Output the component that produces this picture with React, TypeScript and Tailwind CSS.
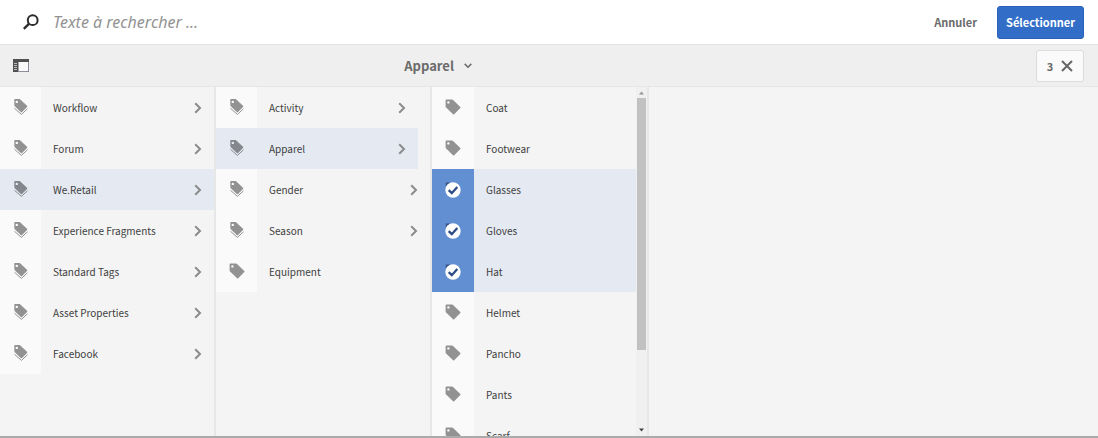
import { useState } from "react";

type Item = { name: string; kind: "tags" | "tag"; children?: boolean; short?: boolean };

const roots: Item[] = [
  "Workflow",
  "Forum",
  "We.Retail",
  "Experience Fragments",
  "Standard Tags",
  "Asset Properties",
  "Facebook",
].map((name) => ({ name, kind: "tags", children: true }));

const groups: Item[] = [
  { name: "Activity", kind: "tags", children: true, short: true },
  { name: "Apparel", kind: "tags", children: true, short: true },
  { name: "Gender", kind: "tags", children: true },
  { name: "Season", kind: "tags", children: true },
  { name: "Equipment", kind: "tag" },
];

const leaves = ["Coat", "Footwear", "Glasses", "Gloves", "Hat", "Helmet", "Pancho", "Pants", "Scarf"];

function TagsIcon() {
  return (
    <svg viewBox="0 0 14 16" className="h-4 w-3.5" aria-hidden="true">
      <path
        fill="currentColor"
        fillRule="evenodd"
        d="M1 0H5.800L13 6.700a.9.9 0 0 1 0 1.200L8 13a.9.9 0 0 1-1.200 0L.8 7.200A1.500 1.500 0 0 1 .3 6V.8A.7.7 0 0 1 1 0ZM2.800 1.700a1.200 1.200 0 1 0 0 2.400 1.200 1.200 0 0 0 0-2.400Z"
      />
      <path fill="none" stroke="currentColor" strokeWidth="1" d="M.5 9.300L7.400 15.400L13.500 9.800" />
    </svg>
  );
}

function TagIcon() {
  return (
    <svg viewBox="0 0 16 16" className="size-4" aria-hidden="true">
      <path
        fill="currentColor"
        fillRule="evenodd"
        d="M1.400.5H7a1.200 1.200 0 0 1 .8.3L15.300 7.900a.8.8 0 0 1 0 1.100L9.200 15.200a.8.8 0 0 1-1.100 0L1.100 8.600A1.600 1.600 0 0 1 .6 7.400V1.300A.8.8 0 0 1 1.400.5ZM3.400 2.200a1.200 1.200 0 1 0 0 2.400 1.200 1.200 0 0 0 0-2.400Z"
      />
    </svg>
  );
}

function CheckIcon() {
  return (
    <svg viewBox="0 0 16 16" className="size-4" aria-hidden="true">
      <path fill="#3a5384" d="M.8.400H5.500L.8 5Z" />
      <circle cx="8" cy="8" r="7.700" fill="#fff" />
      <path fill="none" stroke="#2c4a85" strokeWidth="2.300" d="M3.700 8.200L6.800 11.200L12.300 5.100" />
    </svg>
  );
}

function ChevronRight() {
  return (
    <svg viewBox="0 0 8 12" className="h-3 w-2" aria-hidden="true">
      <path fill="none" stroke="#8b8b8b" strokeWidth="2" d="M1.200 1.300L6 6L1.200 10.700" />
    </svg>
  );
}

function Column({
  label,
  items,
  selected,
  onSelect,
}: {
  label: string;
  items: Item[];
  selected: string;
  onSelect: (name: string) => void;
}) {
  return (
    <nav aria-label={label} className="w-54 shrink-0 overflow-hidden border-r-2 border-[#e7e7e7]">
      {items.map((item) => {
        const active = item.name === selected;
        return (
          <div key={item.name} className={item.short ? "pr-3" : ""}>
            <button
              type="button"
              onClick={() => onSelect(item.name)}
              className={`flex h-[41px] w-full items-center text-left ${active ? "bg-[#e5eaf2]" : ""}`}
            >
              <span
                className={`flex h-full w-[41px] items-center justify-center pb-0.5 ${
                  active ? "text-[#84878d]" : "bg-[#fafafa] text-[#929292]"
                }`}
              >
                {item.kind === "tags" ? <TagsIcon /> : <TagIcon />}
              </span>
              <span className="flex-1 pl-3">{item.name}</span>
              {item.children && (
                <span className="pr-3">
                  <ChevronRight />
                </span>
              )}
            </button>
          </div>
        );
      })}
    </nav>
  );
}

export default function App() {
  const [root, setRoot] = useState("We.Retail");
  const [group, setGroup] = useState("Apparel");
  const [checked, setChecked] = useState<string[]>(["Glasses", "Gloves", "Hat"]);

  const toggle = (name: string) =>
    setChecked((list) => (list.includes(name) ? list.filter((n) => n !== name) : [...list, name]));

  return (
    <div className="flex h-screen flex-col overflow-hidden border-b-2 border-[#aaa] bg-[#f4f4f4] font-['Noto_Sans_CJK_SC',sans-serif] text-[10px] leading-4 text-[#404040]">
      <header className="flex h-[45px] shrink-0 items-center border-b border-[#e2e2e2] bg-white pr-3.5 pl-[23px]">
        <svg viewBox="0 0 16 16" className="size-4 shrink-0" aria-hidden="true">
          <circle cx="9.700" cy="6.200" r="4.900" fill="none" stroke="#2b2b2b" strokeWidth="2" />
          <path stroke="#2b2b2b" strokeWidth="2.400" d="M6.200 9.700L.8 14.900" />
        </svg>
        <input
          type="search"
          aria-label="Texte à rechercher"
          placeholder="Texte à rechercher ..."
          className="ml-3.5 h-8 min-w-0 flex-1 bg-transparent font-['Noto_Sans',sans-serif] text-[16px] italic outline-none placeholder:text-[#929292]"
        />
        <button type="button" className="px-5 text-[11px] font-bold text-[#6b6b6b]">
          Annuler
        </button>
        <button
          type="button"
          className="h-[33px] w-[87px] rounded-[3px] border border-[#2a62bb] bg-[#326ec8] text-[11px] font-bold text-white"
        >
          Sélectionner
        </button>
      </header>

      <div className="grid h-[42px] shrink-0 grid-cols-[39fr_auto_61fr] items-center border-b border-[#e6e6e6] bg-[#efefef] pr-3.5 pl-[13px]">
        <button type="button" aria-label="Rail" className="w-4">
          <svg viewBox="0 0 16 13" className="h-[13px] w-4" aria-hidden="true">
            <path fill="#505050" d="M0 0H16V13H0Z" />
            <path fill="#fafafa" d="M5.500 3H15V12H5.500Z" />
            <path stroke="#bcbcbc" d="M1 4.500H4M1 6.500H4M1 8.500H4M1 10.500H4" />
            <path fill="none" stroke="#8d8d9d" d="M5 12.500H15.500V3" />
          </svg>
        </button>
        <button type="button" className="flex items-center gap-2.5 text-[13px] font-bold text-[#6b6b6b]">
          Apparel
          <svg viewBox="0 0 8 6" className="h-1.5 w-2" aria-hidden="true">
            <path fill="none" stroke="#6b6b6b" strokeWidth="1.500" d="M.7.900L4 4.200L7.300.900" />
          </svg>
        </button>
        <button
          type="button"
          onClick={() => setChecked([])}
          className="flex h-8 w-12 items-center justify-center gap-2 justify-self-end rounded-[3px] border border-[#dcdcdc] bg-[#fafafa] text-[11px] font-bold text-[#6b6b6b]"
        >
          {checked.length}
          <svg viewBox="0 0 12 12" className="size-3" aria-hidden="true">
            <path fill="none" stroke="#666" strokeWidth="2" d="M1 1L11 11M11 1L1 11" />
          </svg>
        </button>
      </div>

      <main className="flex min-h-0 flex-1">
        <Column label="Tags" items={roots} selected={root} onSelect={setRoot} />
        <Column label={root} items={groups} selected={group} onSelect={setGroup} />
        <section aria-label={group} className="flex w-[217px] shrink-0 border-r-2 border-[#e7e7e7]">
          <div className="min-w-0 flex-1 overflow-hidden">
            {leaves.map((name) => {
              const on = checked.includes(name);
              return (
                <label key={name} className={`relative flex h-[41px] items-center ${on ? "bg-[#e5eaf2]" : ""}`}>
                  <input type="checkbox" checked={on} onChange={() => toggle(name)} className="sr-only" />
                  <span
                    className={`flex h-full w-[42px] items-center justify-center ${
                      on ? "bg-[#618fd2]" : "bg-[#fafafa] pb-0.5 text-[#929292]"
                    }`}
                  >
                    {on ? <CheckIcon /> : <TagIcon />}
                  </span>
                  <span className="pl-3">{name}</span>
                </label>
              );
            })}
          </div>
          <div className="flex w-[11px] flex-col items-center bg-[#f0f0f0]" aria-hidden="true">
            <svg viewBox="0 0 11 11" className="size-[11px] shrink-0">
              <path fill="#959595" d="M3 7.500L5.500 4.500L8 7.500Z" />
            </svg>
            <div className="flex w-full flex-1 flex-col px-px">
              <div className="h-[77%] bg-[#c1c1c1]" />
            </div>
            <svg viewBox="0 0 11 11" className="size-[11px] shrink-0">
              <path fill="#404040" d="M3 3.500L5.500 6.500L8 3.500Z" />
            </svg>
          </div>
        </section>
      </main>
    </div>
  );
}
